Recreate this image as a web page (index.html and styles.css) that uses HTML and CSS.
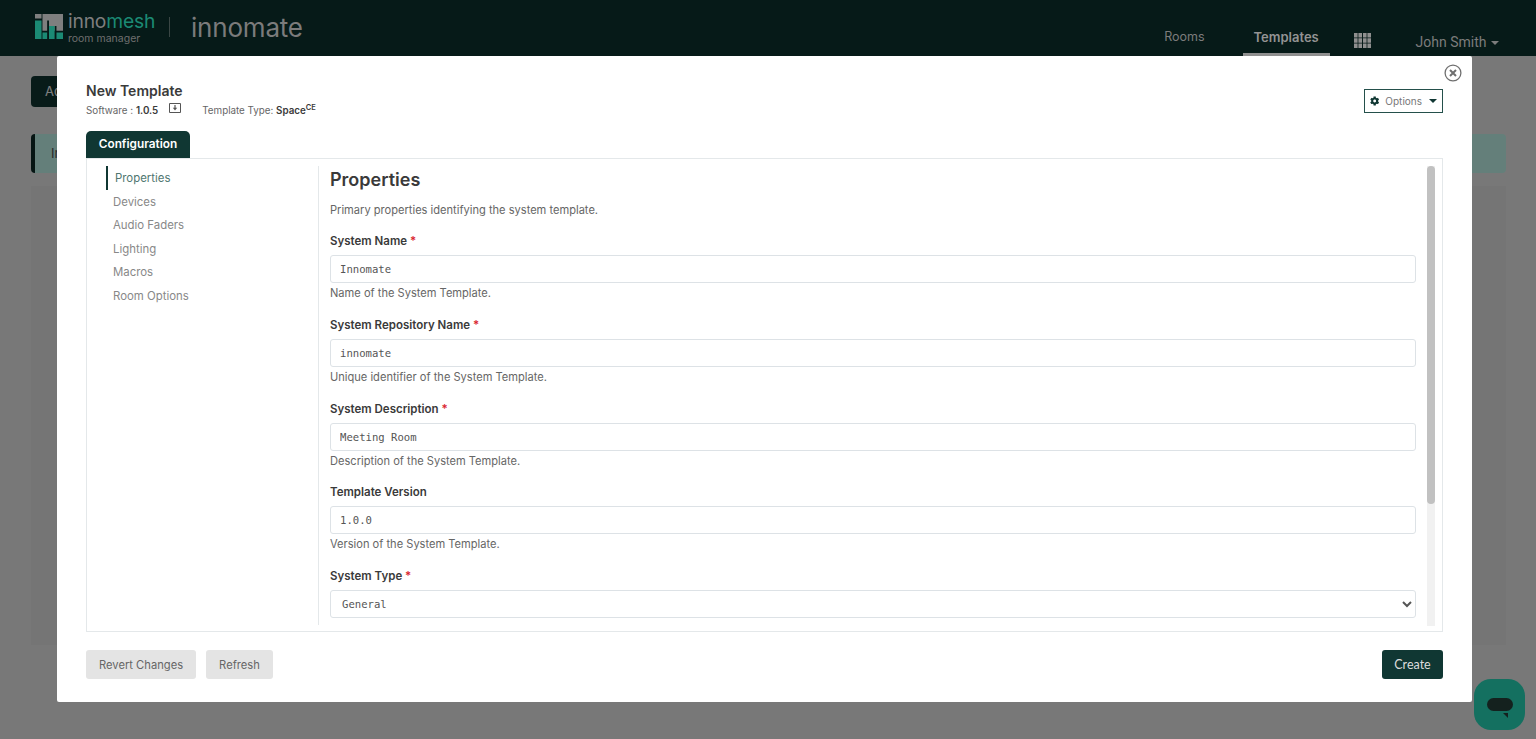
FILE: index.html
```html
<!DOCTYPE html>
<html lang="en">
<head>
  <meta charset="UTF-8" />
  <title>New Template | Innomesh</title>
  <meta name="viewport" content="width=device-width,initial-scale=1"/>
  <link rel="stylesheet" href="styles.css">
</head>
<body>
  <header class="topbar">
    <div class="brand">
      <svg class="brand-mark" width="28" height="27" viewBox="0 0 30 27">
        <path fill="#7f7f7f" d="M0 0h7v5H0zM8 0h22v18h-7v-5h-2v5h-6V7h-2v11H8z"/>
        <path fill="#1b8a74" d="M0 7h7v20H0zM8 20h5v7H8zM15 13h6v14h-6zM23 20h7v7h-7z"/>
      </svg>
      <div class="brand-text">
        <div class="brand-name">inno<span>mesh</span></div>
        <div class="brand-sub">room manager</div>
      </div>
      <div class="brand-sep"></div>
      <div class="brand-product">innomate</div>
    </div>
    <nav class="topnav">
      <a class="nav-link">Rooms</a>
      <a class="nav-link active">Templates</a>
      <svg class="nav-grid" width="17" height="15" viewBox="0 0 17 15">
        <path fill="#8f8f8f" d="M0 0h3.600v4.400H0zM4.400 0H8v4.400H4.400zM9 0h3.600v4.400H9zM13.400 0H17v4.400h-3.600zM0 5.300h3.600v4.400H0zM4.400 5.300H8v4.400H4.400zM9 5.300h3.600v4.400H9zM13.400 5.300H17v4.400h-3.600zM0 10.600h3.600V15H0zM4.400 10.600H8V15H4.400zM9 10.600h3.600V15H9zM13.400 10.600H17V15h-3.600z"/>
      </svg>
      <a class="nav-user">John Smith <i class="caret"></i></a>
    </nav>
  </header>

  <main class="page">
    <div class="page-btn">Add</div>
    <div class="page-alert">Info</div>
    <div class="page-card"><span class="page-dots">⋮</span></div>
  </main>

  <div class="backdrop"></div>

  <section class="modal">
    <button class="modal-close" aria-label="Close">
      <svg width="18" height="18" viewBox="0 0 18 18" fill="none" stroke="#6f6f6f">
        <circle cx="9" cy="9" r="7.900" stroke-width="1.300"/>
        <path d="M6 6l6 6M12 6l-6 6" stroke-width="2"/>
      </svg>
    </button>
    <div class="modal-head">
      <div>
        <h1>New Template</h1>
        <div class="meta">
          <span>Software : <b>1.0.5</b></span>
          <svg class="meta-icon" width="12" height="11" viewBox="0 0 12 11" fill="none" stroke="#555">
            <path d="M.5.500h11v9H.5z" stroke-width="1"/>
            <path d="M6 2v3.500" stroke-width="1.200"/>
            <path d="M3.800 4.800L6 7.400l2.200-2.600z" fill="#555" stroke="none"/>
          </svg>
          <span class="meta-type">Template Type: <b>Space<sup>CE</sup></b></span>
        </div>
      </div>
      <button class="options-btn">
        <svg width="12" height="12" viewBox="0 0 512 512">
          <path fill="#103733" d="M487.4 315.7l-42.6-24.6c4.300-23.200 4.300-47 0-70.200l42.600-24.600c4.900-2.800 7.100-8.600 5.500-14-11.100-35.600-30-67.800-54.700-94.600-3.800-4.100-10-5.100-14.800-2.300L380.800 110c-17.900-15.400-38.500-27.300-60.800-35.100V25.800c0-5.600-3.900-10.500-9.400-11.700-36.700-8.200-74.300-7.800-109.200 0-5.500 1.200-9.400 6.100-9.400 11.700V75c-22.200 7.900-42.800 19.800-60.800 35.100L88.700 85.500c-4.900-2.800-11-1.900-14.800 2.300-24.700 26.700-43.600 58.900-54.700 94.600-1.700 5.400.6 11.200 5.500 14L67.300 221c-4.300 23.200-4.300 47 0 70.200l-42.600 24.600c-4.900 2.800-7.100 8.600-5.500 14 11.100 35.600 30 67.800 54.700 94.600 3.800 4.100 10 5.100 14.800 2.300l42.600-24.600c17.900 15.400 38.500 27.300 60.800 35.100v49.200c0 5.600 3.900 10.500 9.400 11.700 36.700 8.200 74.300 7.800 109.200 0 5.500-1.200 9.400-6.100 9.400-11.700v-49.200c22.200-7.900 42.800-19.800 60.800-35.100l42.600 24.600c4.900 2.800 11 1.900 14.800-2.300 24.700-26.700 43.600-58.900 54.700-94.600 1.500-5.500-.7-11.300-5.600-14.100zM256 336c-44.100 0-80-35.900-80-80s35.900-80 80-80 80 35.900 80 80-35.900 80-80 80z"/>
        </svg>
        <span>Options</span>
        <i class="caret dark"></i>
      </button>
    </div>

    <div class="tabs"><div class="tab">Configuration</div></div>

    <div class="panel">
      <ul class="side">
        <li class="active">Properties</li>
        <li>Devices</li>
        <li>Audio Faders</li>
        <li>Lighting</li>
        <li>Macros</li>
        <li>Room Options</li>
      </ul>
      <div class="form-scroll">
        <h2>Properties</h2>
        <p class="lead">Primary properties identifying the system template.</p>

        <div class="field">
          <label>System Name <em>*</em></label>
          <input type="text" value="Innomate">
          <small>Name of the System Template.</small>
        </div>
        <div class="field">
          <label>System Repository Name <em>*</em></label>
          <input type="text" value="innomate">
          <small>Unique identifier of the System Template.</small>
        </div>
        <div class="field">
          <label>System Description <em>*</em></label>
          <input type="text" value="Meeting Room">
          <small>Description of the System Template.</small>
        </div>
        <div class="field">
          <label>Template Version</label>
          <input type="text" value="1.0.0">
          <small>Version of the System Template.</small>
        </div>
        <div class="field">
          <label>System Type <em>*</em></label>
          <select><option>General</option></select>
        </div>
      </div>
      <div class="scroll-track"><div class="scroll-thumb"></div></div>
    </div>

    <div class="modal-foot">
      <button class="btn grey">Revert Changes</button>
      <button class="btn grey">Refresh</button>
      <button class="btn primary">Create</button>
    </div>
  </section>

  <button class="chat" aria-label="Chat">
    <svg width="26" height="20" viewBox="0 0 26 20">
      <rect x="0" y="0" width="26" height="13" rx="6.500" fill="#14211e"/>
      <path d="M16 15h5v5z" fill="#14211e"/>
    </svg>
  </button>
</body>
</html>
```

FILE: styles.css
```css
* {
  box-sizing: border-box;
}
html, body {
  height: 100%;
}
body {
  margin: 0;
  background: #f1f1f1;
  color: #333;
  font-family: Inter, 'Noto Sans', sans-serif;
  overflow: hidden;
}
.topbar {
  position: relative;
  z-index: 2;
  height: 56px;
  background: #061a18;
  display: flex;
  justify-content: space-between;
  padding: 0 37px 0 35px;
}
.brand {
  display: flex;
  align-items: flex-start;
}
.brand-mark {
  margin-top: 13px;
}
.brand-text {
  margin: 9px 0 0 5px;
  width: 86px;
}
.brand-name {
  font-size: 19.300px;
  line-height: 24px;
  color: #7f7f7f;
  letter-spacing: -0.2px;
}
.brand-name span {
  color: #1b8a74;
}
.brand-sub {
  font-size: 10.500px;
  line-height: 11px;
  color: #6f6f6f;
}
.brand-sep {
  width: 1px;
  height: 20px;
  margin: 17px 21px 0 15px;
  background: #3a4644;
}
.brand-product {
  font-size: 26px;
  line-height: 56px;
  letter-spacing: -0.2px;
  color: #7b7b7b;
}
.topnav {
  display: flex;
  align-items: flex-start;
  font-size: 12.500px;
  color: #7c7c7c;
}
.nav-link {
  height: 56px;
  padding-top: 29px;
  line-height: 16px;
}
.nav-link.active {
  width: 87px;
  margin-left: 38px;
  text-align: center;
  font-size: 13px;
  font-weight: 600;
  color: #939393;
  border-bottom: 3px solid #8f8f8f;
}
.nav-grid {
  margin: 33px 45px 0 24px;
}
.nav-user {
  margin-top: 34px;
  line-height: 16px;
  font-family: Roboto, sans-serif;
  font-size: 14px;
}
.caret {
  display: inline-block;
  margin-left: 1px;
  vertical-align: 2px;
  border-top: 4px solid #7c7c7c;
  border-left: 4px solid transparent;
  border-right: 4px solid transparent;
}
.caret.dark {
  border-top-color: #103733;
  margin-left: 1px;
  vertical-align: 1px;
}
.page {
  padding: 20px 30px 0 31px;
}
.page-btn {
  width: 60px;
  height: 31px;
  background: #103733;
  color: #fff;
  border-radius: 4px;
  padding: 7px 14px;
  font-size: 13px;
}
.page-alert {
  height: 39px;
  margin-top: 27px;
  padding: 11px 16px;
  background: #c8fff4;
  border-left: 4px solid #0c2a27;
  border-radius: 4px;
  font-size: 13px;
  color: #555;
}
.page-card {
  display: flex;
  justify-content: flex-end;
  height: 459px;
  margin-top: 13px;
  padding: 10px 28px 0 0;
  background: #ebebeb;
}
.page-dots {
  font-size: 18px;
  line-height: 22px;
  font-weight: 700;
  color: #2b3a55;
}
.backdrop {
  position: fixed;
  inset: 0;
  background: rgba(0, 0, 0, 0.5);
}
.modal {
  position: fixed;
  z-index: 3;
  left: 57px;
  top: 56px;
  width: 1415px;
  height: 646px;
  background: #fff;
  border-radius: 2px;
  padding: 26px 29px 0;
  display: flex;
  flex-direction: column;
}
.modal-close {
  position: absolute;
  top: 8px;
  right: 10px;
  padding: 0;
  border: 0;
  background: none;
  line-height: 0;
}
.modal-head {
  display: flex;
  justify-content: space-between;
  align-items: flex-start;
  height: 49px;
}
h1 {
  margin: 0;
  font-size: 14px;
  line-height: 17px;
  font-weight: 600;
  color: #3a3a3a;
}
.meta {
  display: flex;
  align-items: flex-start;
  margin-top: 5px;
  font-size: 9.800px;
  line-height: 14px;
  color: #666;
}
.meta b {
  color: #3a3a3a;
  font-weight: 600;
}
.meta sup {
  font-size: 7.500px;
  line-height: 0;
}
.meta-icon {
  margin: -1px 0 0 11px;
}
.meta-type {
  margin-left: 21px;
}
.options-btn {
  display: flex;
  align-items: center;
  gap: 6px;
  width: 79px;
  height: 24px;
  margin-top: 7px;
  padding: 0 5px;
  background: #fff;
  border: 1px solid #24504b;
  color: #777;
  font: 10px Inter, sans-serif;
}
.tabs {
  display: flex;
}
.tab {
  width: 104px;
  height: 27px;
  background: #103733;
  color: #fff;
  border-radius: 5px 5px 0 0;
  text-align: center;
  font-size: 11.800px;
  font-weight: 600;
  line-height: 26px;
}
.panel {
  height: 474px;
  border: 1px solid #e4e8ea;
  padding: 7px 7px 6px 0;
  display: flex;
}
.side {
  list-style: none;
  margin: 0;
  padding: 0 0 0 19px;
  width: 232px;
  border-right: 1px solid #e4e8ea;
  font-size: 11.400px;
  color: #888;
}
.side li {
  height: 23.600px;
  line-height: 24px;
  padding-left: 7px;
}
.side li.active {
  color: #4f7670;
  padding-left: 7px;
  border-left: 2px solid #103733;
}
.form-scroll {
  flex: 1;
  height: 460px;
  padding: 0 11px;
  overflow: hidden;
}
.scroll-track {
  width: 8px;
  height: 460px;
  background: #f1f1f1;
}
.scroll-thumb {
  height: 338px;
  background: #c1c1c1;
  border-radius: 4px;
}
h2 {
  margin: 3px 0 0;
  font-size: 18px;
  line-height: 22px;
  font-weight: 600;
  color: #3a3a3a;
}
.lead {
  margin: 12px 0 0;
  font-size: 11.100px;
  line-height: 14px;
  color: #666;
}
.field {
  height: 83.750px;
  padding-top: 17px;
}
.field label {
  display: block;
  height: 21px;
  font-size: 11.500px;
  line-height: 14px;
  font-weight: 600;
  color: #3a3a3a;
}
.field em {
  color: #d9232e;
  font-style: normal;
}
.field input, .field select {
  display: block;
  width: 100%;
  height: 28px;
  padding: 0 9px;
  border: 1px solid #dde2e6;
  border-radius: 3px;
  background: #fff;
  color: #555;
  font-family: 'DejaVu Sans Mono', monospace;
  font-size: 10.600px;
}
.field select {
  padding: 0 7px;
}
.field small {
  display: block;
  margin-top: 3px;
  font-size: 11.100px;
  line-height: 15px;
  color: #666;
}
.modal-foot {
  display: flex;
  gap: 10px;
  margin-top: 18px;
}
.btn {
  height: 29px;
  border: 0;
  border-radius: 3px;
  padding: 0 13px;
  font: 11.200px Inter, sans-serif;
}
.btn.grey {
  background: #e4e4e4;
  color: #666;
}
.btn.primary {
  margin-left: auto;
  background: #103733;
  color: #ddd;
  font-family: Lato, sans-serif;
  font-size: 12.500px;
  width: 61px;
  padding: 0;
}
.chat {
  position: fixed;
  z-index: 3;
  left: 1474px;
  top: 679px;
  width: 51px;
  height: 51px;
  padding: 6px 0 0;
  border: 0;
  border-radius: 17px;
  background: #147060;
  line-height: 0;
}
```
